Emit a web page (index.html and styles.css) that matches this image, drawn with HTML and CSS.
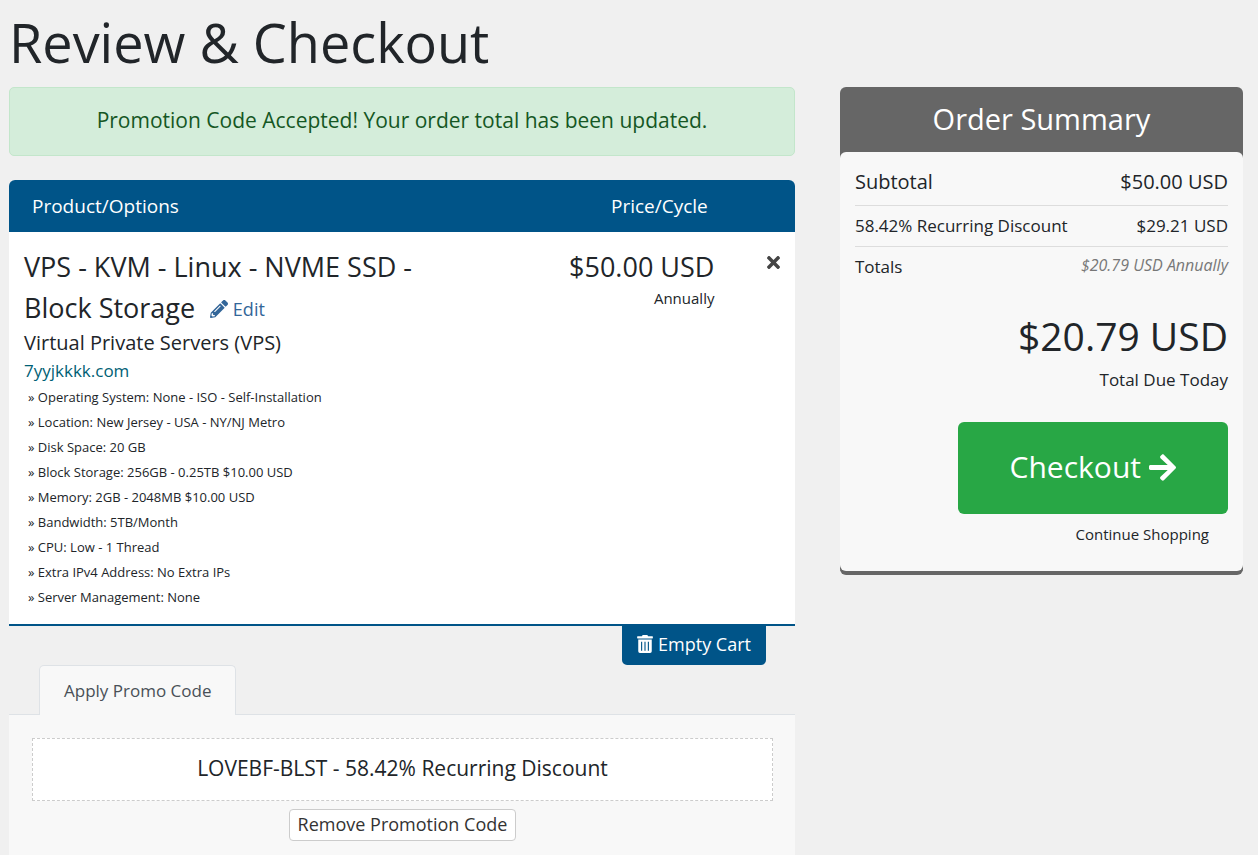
FILE: index.html
```html
<!DOCTYPE html>
<html lang="en">
<head>
<meta charset="utf-8">
<meta name="viewport" content="width=device-width, initial-scale=1">
<title>Review &amp; Checkout</title>
<link rel="stylesheet" href="styles.css">
</head>
<body>
<main class="page">
  <h1 class="page-title">Review &amp; Checkout</h1>
  <div class="columns">
    <div class="cart">
      <div class="alert" role="status">Promotion Code Accepted! Your order total has been updated.</div>

      <section class="items">
        <div class="items-header">
          <div>Product/Options</div>
          <div class="items-header-price">Price/Cycle</div>
        </div>
        <div class="item">
          <div class="item-info">
            <h2 class="item-title">VPS - KVM - Linux - NVME SSD - Block Storage
              <a class="edit-link" href="#"><svg class="icon-edit" viewBox="0 0 512 512" aria-hidden="true"><path fill="currentColor" d="M497.9 142.1l-46.1 46.1c-4.7 4.7-12.3 4.7-17 0l-111-111c-4.7-4.7-4.7-12.3 0-17l46.1-46.1c18.7-18.7 49.1-18.7 67.9 0l60.1 60.1c18.8 18.7 18.8 49.1 0 67.9zM284.2 99.8L21.6 362.4.4 483.9c-2.9 16.4 11.4 30.6 27.8 27.8l121.5-21.3 262.6-262.6c4.7-4.7 4.7-12.3 0-17l-111-111c-4.8-4.7-12.4-4.7-17.1 0zM124.1 339.9c-5.5-5.5-5.5-14.3 0-19.8l154-154c5.5-5.5 14.3-5.5 19.8 0s5.5 14.3 0 19.8l-154 154c-5.5 5.5-14.3 5.5-19.8 0zM88 424h48v36.3l-64.5 11.3-31.1-31.1L51.7 376H88v48z"/></svg> Edit</a>
            </h2>
            <div class="item-group">Virtual Private Servers (VPS)</div>
            <div class="item-domain">7yyjkkkk.com</div>
            <ul class="item-options">
              <li>» Operating System: None - ISO - Self-Installation</li>
              <li>» Location: New Jersey - USA - NY/NJ Metro</li>
              <li>» Disk Space: 20 GB</li>
              <li>» Block Storage: 256GB - 0.25TB $10.00 USD</li>
              <li>» Memory: 2GB - 2048MB $10.00 USD</li>
              <li>» Bandwidth: 5TB/Month</li>
              <li>» CPU: Low - 1 Thread</li>
              <li>» Extra IPv4 Address: No Extra IPs</li>
              <li>» Server Management: None</li>
            </ul>
          </div>
          <div class="item-price">
            <div class="item-amount">$50.00 USD</div>
            <div class="item-cycle">Annually</div>
          </div>
          <div class="item-remove">
            <button class="remove-button" type="button" aria-label="Remove"><svg class="icon-remove" viewBox="0 80 352 352" aria-hidden="true"><path fill="currentColor" d="M242.72 256l100.07-100.07c12.28-12.28 12.28-32.19 0-44.48l-22.24-22.24c-12.28-12.28-32.19-12.28-44.48 0L176 189.28 75.93 89.21c-12.28-12.28-32.19-12.28-44.48 0L9.21 111.45c-12.28 12.28-12.28 32.19 0 44.48L109.28 256 9.21 356.07c-12.28 12.28-12.28 32.19 0 44.48l22.24 22.24c12.28 12.28 32.2 12.28 44.48 0L176 322.72l100.07 100.07c12.28 12.28 32.2 12.28 44.48 0l22.24-22.24c12.28-12.28 12.28-32.19 0-44.48L242.72 256z"/></svg></button>
          </div>
        </div>
      </section>
      <div class="cart-actions">
        <button class="empty-button" type="button"><svg class="icon-trash" viewBox="0 0 448 512" aria-hidden="true"><path fill="currentColor" fill-rule="evenodd" d="M432 32H312l-9-19a24 24 0 0 0-22-13H166a24 24 0 0 0-21 13l-9 19H16A16 16 0 0 0 0 48v32a16 16 0 0 0 16 16h416a16 16 0 0 0 16-16V48a16 16 0 0 0-16-16zM32 128v336a48 48 0 0 0 48 48h288a48 48 0 0 0 48-48V128zM112 192h32v256h-32zM208 192h32v256h-32zM304 192h32v256h-32z"/></svg>Empty Cart</button>
      </div>

      <div class="tabs" role="tablist">
        <a class="tab" role="tab" aria-selected="true" href="#promo">Apply Promo Code</a>
      </div>
      <section class="promo" id="promo">
        <div class="promo-code">LOVEBF-BLST - 58.42% Recurring Discount</div>
        <button class="promo-remove" type="button">Remove Promotion Code</button>
      </section>
    </div>

    <aside class="summary">
      <h2 class="summary-title">Order Summary</h2>
      <div class="summary-body">
        <div class="summary-row summary-subtotal"><span>Subtotal</span><span>$50.00 USD</span></div>
        <div class="summary-row"><span>58.42% Recurring Discount</span><span>$29.21 USD</span></div>
        <div class="summary-row summary-totals"><span>Totals</span><span class="recurring">$20.79 USD Annually</span></div>
        <div class="due-amount">$20.79 USD</div>
        <div class="due-label">Total Due Today</div>
        <button class="checkout-button" type="button">Checkout<svg class="icon-arrow" viewBox="0 32 448 448" aria-hidden="true"><path fill="currentColor" d="M190.5 66.9l22.2-22.2c9.4-9.4 24.6-9.4 33.9 0L441 239c9.4 9.4 9.4 24.6 0 33.9L246.6 467.3c-9.4 9.4-24.6 9.4-33.9 0l-22.2-22.2c-9.5-9.5-9.3-25 .4-34.3L311.4 296H24c-13.3 0-24-10.7-24-24v-32c0-13.3 10.7-24 24-24h287.4L190.9 101.2c-9.8-9.3-10-24.8-.4-34.3z"/></svg></button>
        <a class="continue-link" href="#">Continue Shopping</a>
      </div>
    </aside>
  </div>
</main>
</body>
</html>
```
FILE: styles.css
```css
* {
  box-sizing: border-box;
}

body {
  margin: 0;
  background: #f0f0f0;
  color: #212529;
  font-family: "Open Sans", sans-serif;
  font-size: 17px;
}

h1,
h2 {
  margin: 0;
  font-weight: 400;
}

button {
  font-family: inherit;
  cursor: pointer;
}

.page {
  padding: 9px 15px 0 9px;
}

.page-title {
  margin-bottom: 12px;
  font-size: 54px;
  line-height: 66px;
}

.columns {
  display: grid;
  grid-template-columns: 39fr 20fr;
  gap: 45px;
  align-items: start;
}

.alert {
  margin-bottom: 24px;
  padding: 17px 18px 19px;
  border: 1px solid #c3e6cb;
  border-radius: 5px;
  background: #d4edda;
  color: #155724;
  font-size: 21px;
  line-height: 31px;
  text-align: center;
}

.items {
  border-bottom: 2px solid #005488;
  background: #fff;
  border-radius: 6px 6px 0 0;
}

.items-header,
.item {
  display: grid;
  grid-template-columns: 7fr 4fr 1fr;
}

.items-header {
  padding: 12px 8px;
  border-radius: 6px 6px 0 0;
  background: #005488;
  color: #fff;
  font-size: 19px;
  line-height: 28px;
}

.items-header > div {
  padding: 0 15px;
}

.items-header-price {
  text-align: right;
}

.item {
  padding: 14px 0;
}

.item > div {
  padding: 0 15px;
}

.item-title {
  margin-bottom: 1px;
  font-size: 27px;
  line-height: 41px;
}

.edit-link {
  margin-left: 8px;
  color: #336699;
  font-size: 18px;
  line-height: 28px;
  text-decoration: none;
  vertical-align: 2px;
}

.icon-edit {
  width: 18px;
  height: 18px;
  vertical-align: -2px;
}

.item-group {
  font-size: 20px;
  line-height: 28px;
}

.item-domain {
  color: #005f75;
  line-height: 28px;
}

.item-options {
  margin: 0;
  padding: 0 4px;
  list-style: none;
  font-size: 13px;
  line-height: 25px;
}

.item-price {
  text-align: right;
}

.item-amount {
  font-size: 27px;
  line-height: 41px;
}

.item-cycle {
  font-size: 15px;
  line-height: 22px;
}

.item-remove {
  text-align: right;
}

.remove-button {
  display: inline-flex;
  padding: 10px 0;
  border: 0;
  background: none;
  color: #444;
}

.icon-remove {
  width: 13px;
  height: 13px;
}

.cart-actions {
  display: flex;
  justify-content: flex-end;
  padding-right: 29px;
}

.empty-button {
  display: flex;
  align-items: center;
  gap: 5px;
  padding: 4px 15px 7px;
  border: 0;
  border-radius: 0 0 5px 5px;
  background: #005488;
  color: #fff;
  font-size: 18px;
  line-height: 28px;
}

.icon-trash {
  width: 16px;
  height: 18px;
}

.tabs {
  display: flex;
  padding: 0 30px;
}

.tab {
  z-index: 1;
  margin-bottom: -1px;
  padding: 12px 24px;
  border: 1px solid #dee2e6;
  border-bottom: 0;
  border-radius: 5px 5px 0 0;
  background: #f8f8f8;
  color: #495057;
  line-height: 25px;
  text-decoration: none;
}

.promo {
  display: flex;
  flex-direction: column;
  align-items: center;
  gap: 8px;
  padding: 23px 22px 32px 23px;
  border-top: 1px solid #dee2e6;
  background: #f8f8f8;
}

.promo-code {
  align-self: stretch;
  padding: 14px 15px 16px;
  border: 1px dashed #ccc;
  background: #fff;
  font-size: 21px;
  line-height: 31px;
  text-align: center;
}

.promo-remove {
  padding: 0 8px 2px;
  border: 1px solid #ccc;
  border-radius: 4px;
  background: #fff;
  color: #333;
  font-size: 18px;
  line-height: 28px;
}

.summary {
  border-bottom: 4px solid #666;
  border-radius: 6px;
  background: #666;
}

.summary-title {
  padding: 11px 12px 13px;
  color: #fff;
  font-size: 29px;
  line-height: 41px;
  text-align: center;
}

.summary-body {
  display: flex;
  flex-direction: column;
  padding: 8px 15px 17px;
  border-radius: 6px;
  background: #f8f8f8;
}

.summary-row {
  display: flex;
  justify-content: space-between;
  padding: 6px 0;
  border-bottom: 1px solid #ddd;
  line-height: 28px;
}

.summary-subtotal {
  padding: 8px 0 9px;
  font-size: 20px;
}

.summary-totals {
  border-bottom: 0;
}

.recurring {
  color: #777;
  font-size: 16px;
  font-style: italic;
  line-height: 24px;
}

.due-amount {
  margin-top: 20px;
  font-size: 39px;
  line-height: 58px;
  text-align: right;
}

.due-label {
  padding-top: 1px;
  line-height: 28px;
  text-align: right;
}

.checkout-button {
  display: flex;
  align-items: center;
  align-self: flex-end;
  gap: 8px;
  margin-top: 28px;
  padding: 23px 52px 25px;
  border: 0;
  border-radius: 6px;
  background: #28a745;
  color: #fff;
  font-size: 30px;
  line-height: 44px;
}

.icon-arrow {
  width: 27px;
  height: 27px;
}

.continue-link {
  align-self: flex-end;
  padding: 8px 19px;
  color: #212529;
  font-size: 15px;
  line-height: 24px;
  text-decoration: none;
}
```
